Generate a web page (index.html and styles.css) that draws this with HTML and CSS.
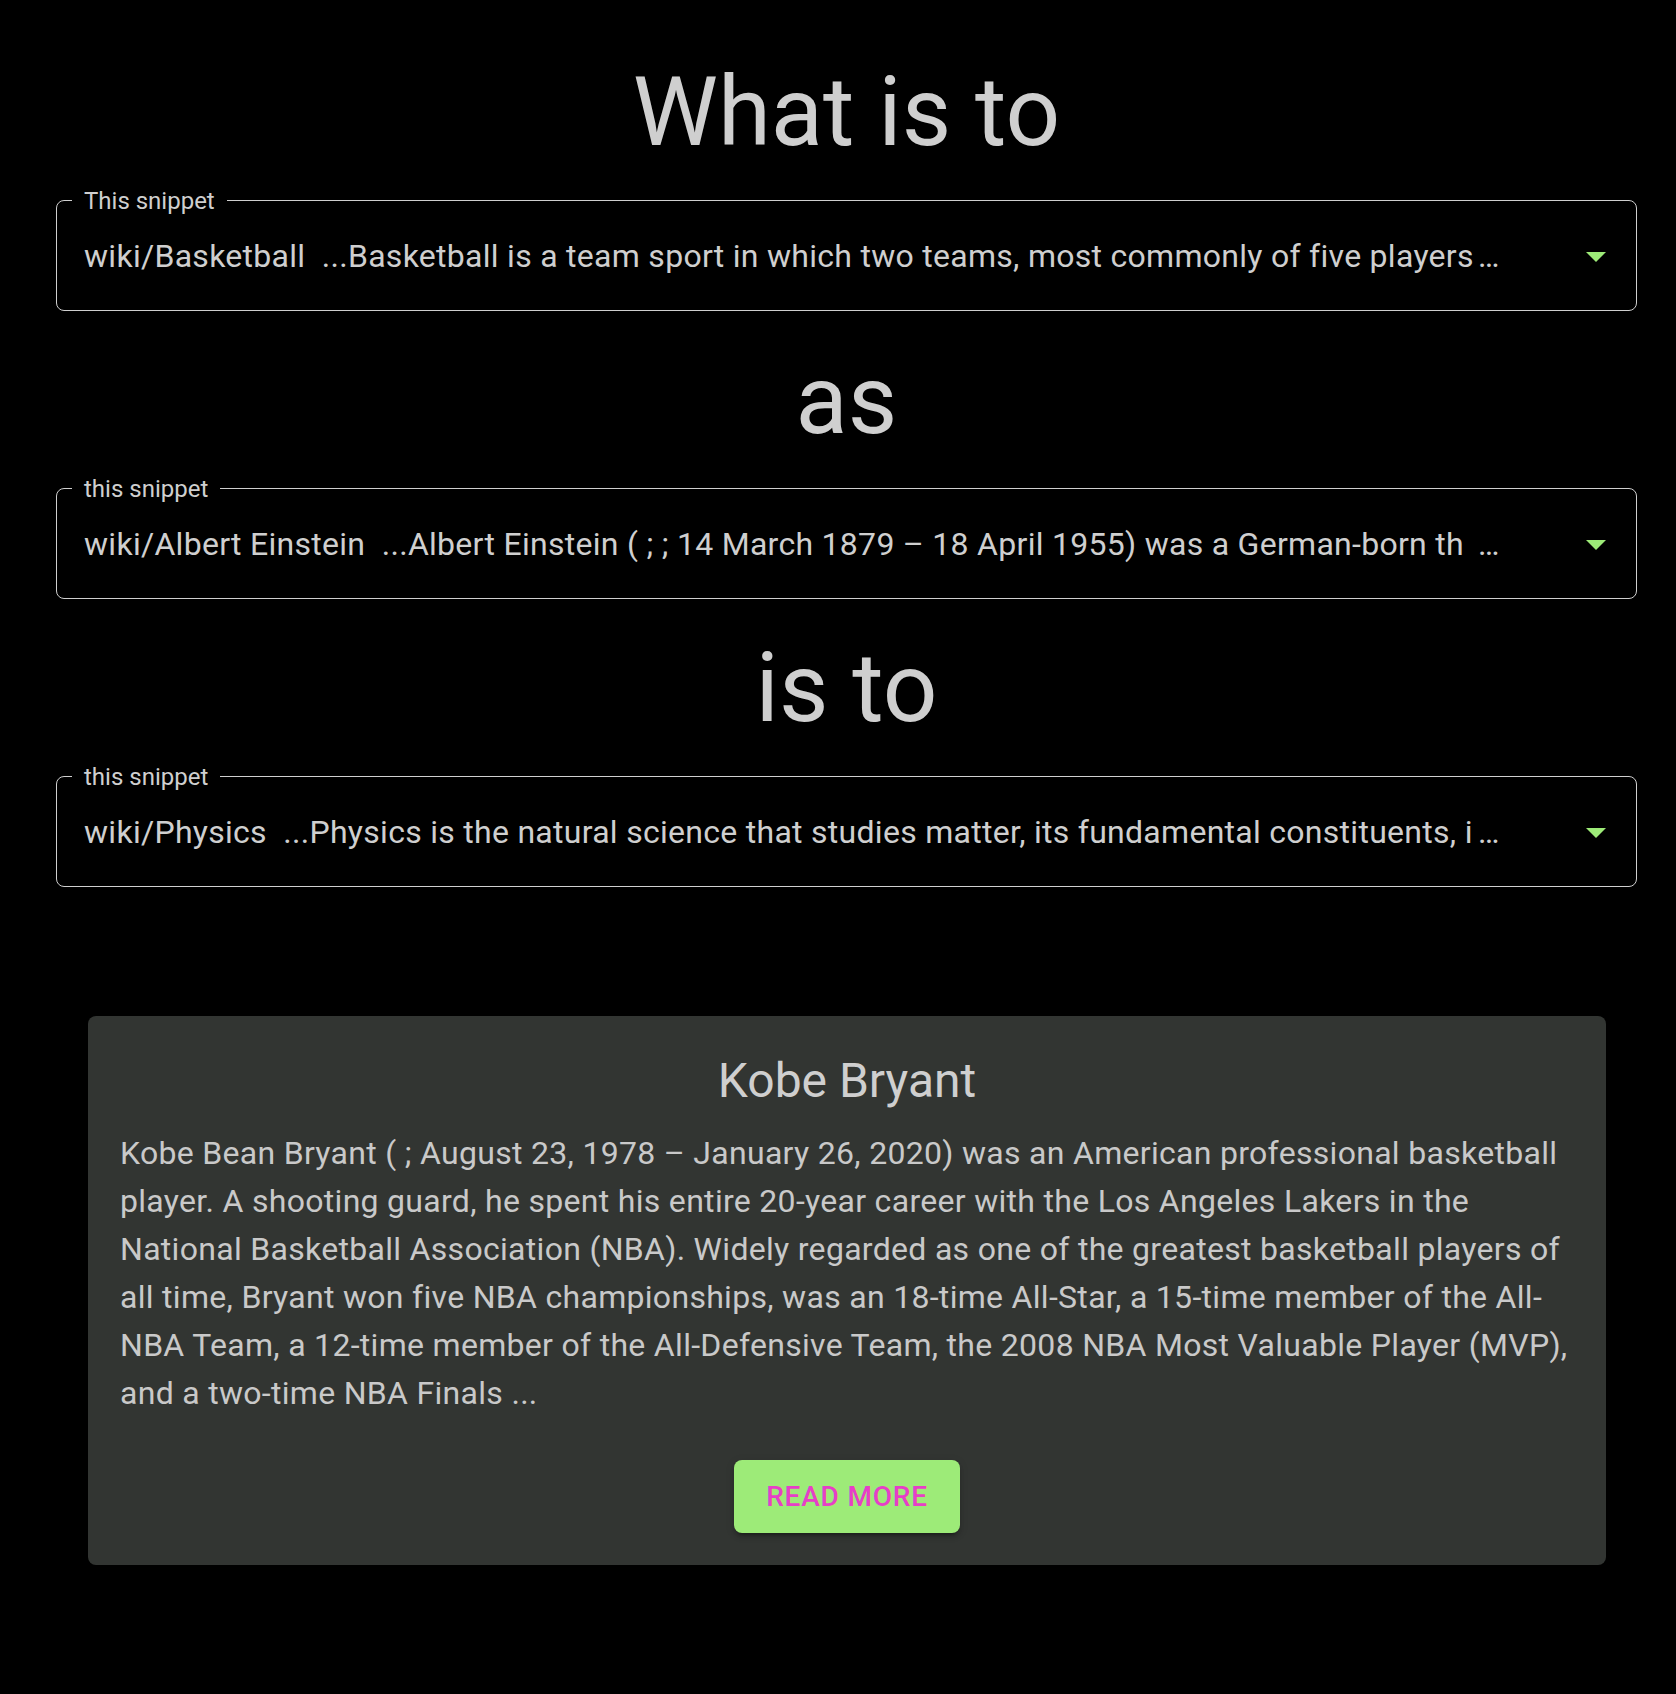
FILE: index.html
```html
<!DOCTYPE html>
<html lang="en">
<head>
<meta charset="utf-8">
<title>What is to</title>
<link rel="stylesheet" href="styles.css">
</head>
<body>
<main class="page">
  <h1 class="phrase">What is to</h1>
  <div class="select">
    <span class="select-label">This snippet</span>
    <div class="select-value">
      <span class="snippet">wiki/Basketball&nbsp;&nbsp;...Basketball is a team sport in which two teams, most commonly of five players</span><span class="ell">…</span>
    </div>
    <svg class="arrow" width="20" height="10" viewBox="0 0 20 10"><path d="M0 0 L10 10 L20 0 Z"/></svg>
  </div>

  <h1 class="phrase">as</h1>
  <div class="select">
    <span class="select-label">this snippet</span>
    <div class="select-value">
      <span class="snippet">wiki/Albert Einstein&nbsp;&nbsp;...Albert Einstein ( ; ; 14 March 1879 – 18 April 1955) was a German-born th</span><span class="ell">…</span>
    </div>
    <svg class="arrow" width="20" height="10" viewBox="0 0 20 10"><path d="M0 0 L10 10 L20 0 Z"/></svg>
  </div>

  <h1 class="phrase">is to</h1>
  <div class="select">
    <span class="select-label">this snippet</span>
    <div class="select-value">
      <span class="snippet">wiki/Physics&nbsp;&nbsp;...Physics is the natural science that studies matter, its fundamental constituents, i</span><span class="ell">…</span>
    </div>
    <svg class="arrow" width="20" height="10" viewBox="0 0 20 10"><path d="M0 0 L10 10 L20 0 Z"/></svg>
  </div>

  <section class="card">
    <h2 class="card-title">Kobe Bryant</h2>
    <p class="card-body">Kobe Bean Bryant ( ; August 23, 1978 – January 26, 2020) was an American professional basketball player. A shooting guard, he spent his entire 20-year career with the Los Angeles Lakers in the National Basketball Association (NBA). Widely regarded as one of the greatest basketball players of all time, Bryant won five NBA championships, was an 18-time All-Star, a 15-time member of the All-NBA Team, a 12-time member of the All-Defensive Team, the 2008 NBA Most Valuable Player (MVP), and a two-time NBA Finals ...</p>
    <div class="card-actions">
      <button class="read-more" type="button">Read more</button>
    </div>
  </section>
</main>
</body>
</html>
```

FILE: styles.css
```css
html, body {
  margin: 0;
  padding: 0;
  background: #000;
}

body {
  font-family: Roboto, "Liberation Sans", sans-serif;
  color: #cfcfcf;
}

.page {
  padding: 56px 39px 129px 56px;
  display: flex;
  flex-direction: column;
}

.phrase {
  margin: 0;
  font-size: 96px;
  line-height: 112px;
  font-weight: 400;
  text-align: center;
  color: #cfcfcf;
}

.select {
  position: relative;
  margin: 32px 0 33px;
  height: 111px;
  box-sizing: border-box;
  border: 1px solid #cfcfcf;
  border-radius: 8px;
  display: flex;
  align-items: center;
  padding: 0 30px 0 27px;
}

.select-label {
  position: absolute;
  top: -12px;
  left: 15px;
  padding: 0 12px 0 12px;
  background: #000;
  font-size: 24px;
  line-height: 24px;
  color: #cfcfcf;
}

.select-value {
  flex: 1;
  min-width: 0;
  display: flex;
  font-size: 32px;
  line-height: 46px;
  letter-spacing: 0.28px;
}

.snippet {
  flex: none;
  width: 1394px;
  white-space: nowrap;
}

.ell {
  flex: none;
  white-space: nowrap;
}

.arrow {
  flex: none;
  fill: #9deb78;
  margin-top: 2px;
}

.card {
  margin: 96px 31px 0 32px;
  background: #323532;
  border-radius: 8px;
  padding: 33px 32px 32px;
  display: flex;
  flex-direction: column;
}

.card-title {
  margin: 0 0 16px;
  font-size: 48px;
  line-height: 64px;
  font-weight: 400;
  text-align: center;
  color: #cfcfcf;
}

.card-body {
  margin: 0;
  font-size: 32px;
  line-height: 48px;
  letter-spacing: 0.3px;
  color: #c9c9c9;
}

.card-actions {
  display: flex;
  justify-content: center;
  margin-top: 43px;
}

.read-more {
  font-family: Roboto, "Liberation Sans", sans-serif;
  font-size: 28px;
  font-weight: 500;
  line-height: 49px;
  letter-spacing: 0.8px;
  text-transform: uppercase;
  color: #e63fc7;
  background: #9deb78;
  border: none;
  border-radius: 8px;
  padding: 12px 32px;
  box-shadow: 0 6px 2px -4px rgba(0,0,0,0.2), 0 4px 4px 0 rgba(0,0,0,0.14), 0 2px 10px 0 rgba(0,0,0,0.12);
  cursor: pointer;
}
```
